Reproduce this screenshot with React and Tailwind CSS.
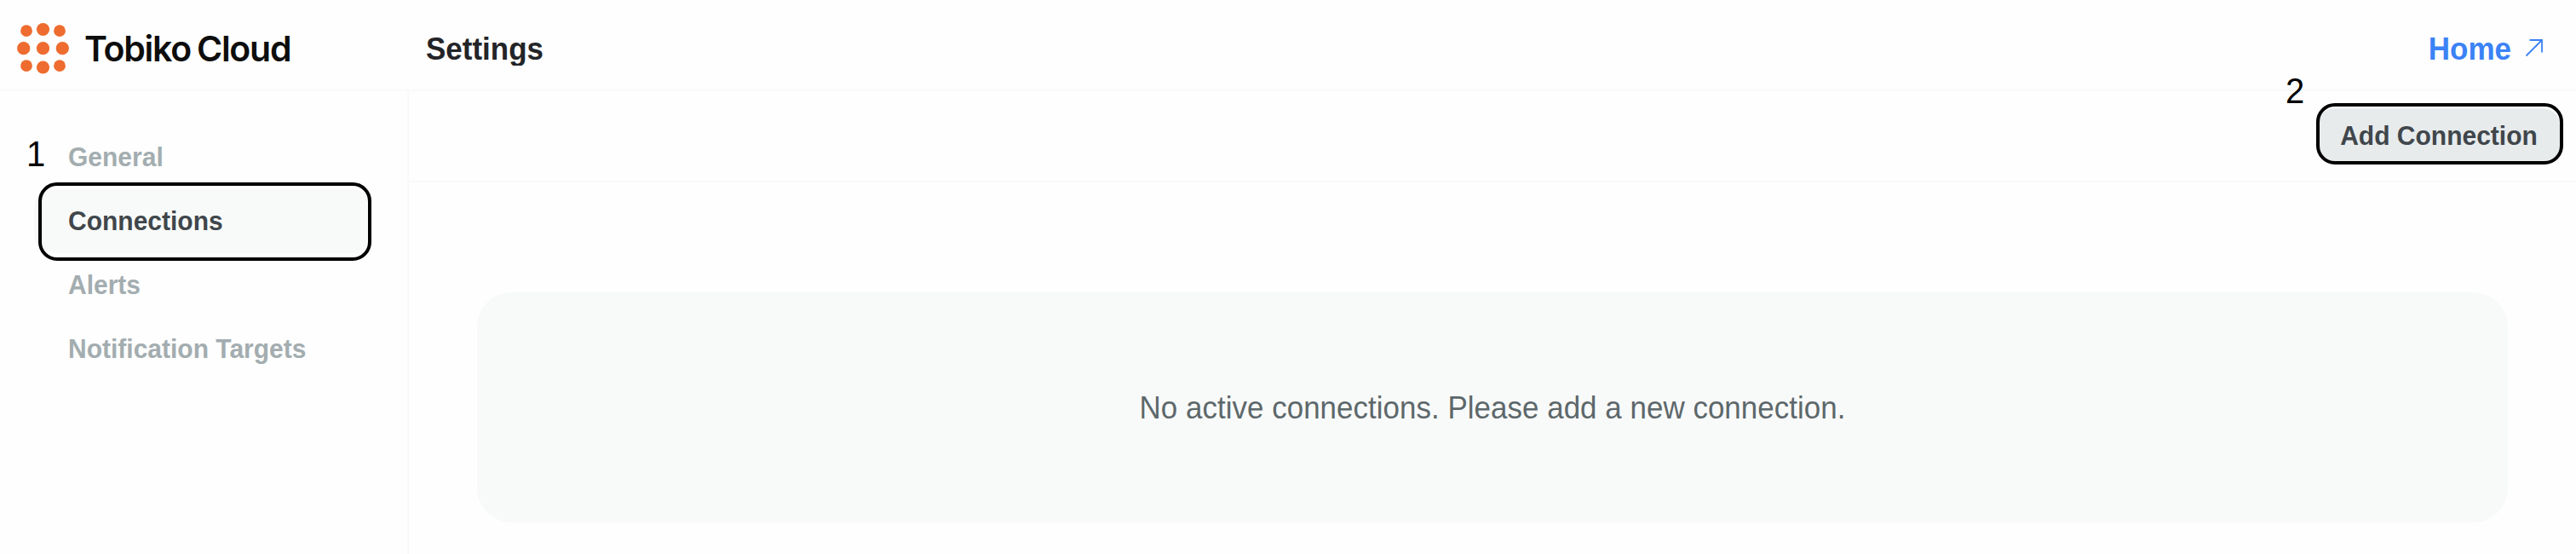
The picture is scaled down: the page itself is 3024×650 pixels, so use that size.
const dots = [
  [31, 36.2, 6.9], [50.5, 34.5, 7.6], [70, 36.2, 6.9],
  [27.7, 56.7, 7.6], [50.5, 56.7, 7.6], [73.3, 56.7, 7.6],
  [31, 77.2, 6.9], [50.5, 79, 7.6], [70, 77.2, 6.9],
];

const items = ["General", "Connections", "Alerts", "Notification Targets"];

export default function App() {
  return (
    <div className="relative flex h-[650px] w-[3024px] flex-col overflow-hidden bg-[#fefefe] font-['Liberation_Sans',Arial,sans-serif]">
      <header className="flex h-[107px] shrink-0 items-center border-b-2 border-[#f9f9fa]">
        <div className="flex h-full w-[500px] items-center">
          <svg className="h-[105px] w-[99px]" viewBox="0 0 99 105" fill="#ee6c2f">
            {dots.map(([x, y, r]) => (
              <circle key={`${x}-${y}`} cx={x} cy={y} r={r} />
            ))}
          </svg>
          <span className="mt-[9px] whitespace-nowrap font-['Inter',sans-serif] text-[41px] font-[560] leading-none tracking-[-0.031em] text-[#0d0d0d] [word-spacing:-2px]">
            Tobiko Cloud
          </span>
        </div>
        <h1 className="mt-[8px] scale-y-[1.045] text-[35px] font-bold leading-none text-[#232428]">Settings</h1>
        <a className="ml-auto mr-[38px] mt-[8px] flex items-center text-[35px] font-bold leading-none text-[#3b82f6]">
          <span className="scale-y-[1.045]">Home</span>
          <svg className="-mt-[2px] ml-[16px] h-[22px] w-[22px]" viewBox="0 0 22 22" fill="none" stroke="currentColor" strokeWidth="1.8">
            <path d="M1.5 20.5 20 2M5.5 2H20V16.5" />
          </svg>
        </a>
      </header>

      <div className="flex min-h-0 flex-1">
        <aside className="w-[480px] shrink-0 border-r-2 border-[#f9f9fa] pl-[40px] pt-[40px]">
          <nav className="flex w-[395px] flex-col">
            {items.map((label) => (
              <a
                key={label}
                className={
                  label === "Connections"
                    ? "flex h-[75px] items-center rounded-[22px] bg-[#f8faf9] pl-[40px] text-[30px] font-bold text-[#40464b]"
                    : "flex h-[75px] items-center pl-[40px] text-[30px] font-bold text-[#a3adb0]"
                }
              >
                <span className="scale-y-[1.045]">{label}</span>
              </a>
            ))}
          </nav>
        </aside>

        <main className="flex flex-1 flex-col">
          <div className="flex h-[107px] shrink-0 items-center justify-end border-b-2 border-[#f9f9fa] pr-[19px]">
            <button className="flex h-[66px] w-[284px] items-center justify-center rounded-[20px] bg-[#e7ebec] text-[30px] font-bold text-[#40464b]">
              <span className="scale-y-[1.045]">Add Connection</span>
            </button>
          </div>
          <section className="ml-[80px] mr-[80px] mt-[129px] flex h-[270px] items-center justify-center rounded-[40px] bg-[#f8faf9]">
            <p className="scale-y-[1.045] whitespace-nowrap text-[35px] text-[#5d686b]">
              No active connections. Please add a new connection.
            </p>
          </section>
        </main>
      </div>

      <div className="absolute left-[45px] top-[214px] h-[92px] w-[391px] rounded-[22px] border-4 border-black" />
      <span className="absolute left-[31px] top-[160px] scale-y-[1.045] text-[40px] leading-none text-black">1</span>
      <div className="absolute left-[2719px] top-[121px] h-[72px] w-[290px] rounded-[22px] border-4 border-black" />
      <span className="absolute left-[2683px] top-[86px] scale-y-[1.045] text-[40px] leading-none text-black">2</span>
    </div>
  );
}
